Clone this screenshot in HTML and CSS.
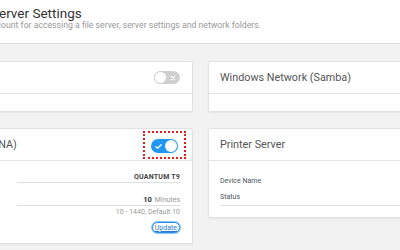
FILE: index.html
```html
<!DOCTYPE html>
<html>
<head>
<meta charset="utf-8">
<link rel="stylesheet" href="styles.css">
</head>
<body>
<header class="header">
  <h1 class="title">Server Settings</h1>
  <p class="subtitle">Set up an account for accessing a file server, server settings and network folders.</p>
</header>
<main class="grid">
  <div class="col">
    <section class="card">
      <div class="card-head">
        <h2 class="card-title">FTP Server</h2>
        <span class="toggle off">
          <svg class="toggle-icon" viewBox="0 0 8 8"><path d="M1.5 1.5 6.5 6.5M6.5 1.5 1.5 6.5" stroke="#fff" stroke-width="1.6" stroke-linecap="round"/></svg>
          <span class="knob"></span>
        </span>
      </div>
      <div class="card-body empty"></div>
    </section>
    <section class="card">
      <div class="card-head">
        <h2 class="card-title">Media Server (DLNA)</h2>
        <span class="focus">
          <span class="toggle on">
            <svg class="toggle-icon" viewBox="0 0 8 8"><path d="M1 4.2 3 6 7 2" fill="none" stroke="#fff" stroke-width="1.4" stroke-linecap="round" stroke-linejoin="round"/></svg>
            <span class="knob"></span>
          </span>
        </span>
      </div>
      <div class="card-body form">
        <div class="row first">
          <span class="label">Device Name</span>
          <span class="field"><span class="value">QUANTUM T9</span></span>
        </div>
        <div class="row second">
          <span class="label">Sleep Timer</span>
          <span class="field"><span class="num">10</span><span class="unit">Minutes</span></span>
        </div>
        <div class="hint">10 - 1440, Default 10</div>
        <div class="actions"><button class="btn">Update</button></div>
      </div>
    </section>
  </div>
  <div class="col">
    <section class="card">
      <div class="card-head">
        <h2 class="card-title">Windows Network (Samba)</h2>
      </div>
      <div class="card-body empty"></div>
    </section>
    <section class="card">
      <div class="card-head">
        <h2 class="card-title">Printer Server</h2>
      </div>
      <div class="card-body info">
        <div class="info-row">Device Name</div>
        <div class="info-row last">Status</div>
      </div>
    </section>
  </div>
</main>
</body>
</html>
```
FILE: styles.css
```css
html, body {
  margin: 0;
  padding: 0;
}
body {
  width: 400px;
  height: 250px;
  overflow: hidden;
  background: #f2f2f2;
  font-family: Roboto, "Liberation Sans", sans-serif;
  color: #333;
}
.header {
  background: #fff;
  border-bottom: 1px solid #dcdcdc;
  height: 44px;
  box-sizing: border-box;
  padding-top: 6px;
}
.title {
  margin: 0 0 0 -9px;
  font-size: 13.5px;
  font-weight: 400;
  line-height: 15px;
  color: #333;
  white-space: nowrap;
}
.subtitle {
  margin: 0 0 0 -51px;
  font-size: 8.7px;
  line-height: 9px;
  color: #9a9a9a;
  white-space: nowrap;
}
.grid {
  display: grid;
  grid-template-columns: 289px 289px;
  column-gap: 15px;
  margin: 17px 0 0 -96px;
}
.col {
  display: flex;
  flex-direction: column;
  gap: 16px;
}
.card {
  background: #fff;
  border: 1px solid #e2e2e2;
  border-radius: 2px;
  box-shadow: 0 1px 2px rgba(0,0,0,0.06);
}
.card-head {
  height: 31px;
  display: flex;
  align-items: center;
  justify-content: space-between;
  padding: 0 12px 0 11px;
  border-bottom: 1px solid #e6e6e6;
}
.card-title {
  margin: 0;
  font-size: 10.8px;
  font-weight: 400;
  color: #555;
}
.card-body.empty {
  height: 17px;
}
.toggle {
  position: relative;
  display: inline-flex;
  align-items: center;
  width: 26px;
  height: 13px;
  border-radius: 7px;
  box-sizing: border-box;
}
.toggle.off {
  background: #cfcfcf;
  justify-content: flex-end;
  padding-right: 4px;
}
.toggle.on {
  background: #2196f3;
  justify-content: flex-start;
  padding-left: 4px;
  width: 27px;
  height: 14px;
}
.toggle-icon {
  width: 6px;
  height: 6px;
  display: block;
}
.toggle.on .toggle-icon {
  width: 7px;
  height: 7px;
}
.knob {
  position: absolute;
  border-radius: 50%;
  background: #fff;
  box-sizing: border-box;
}
.toggle.off .knob {
  left: 0;
  top: 0;
  width: 13px;
  height: 13px;
  border: 1px solid #cfcfcf;
}
.toggle.on .knob {
  right: 1px;
  top: 1px;
  width: 12px;
  height: 12px;
}
.focus {
  display: inline-flex;
  padding: 6px 6px 4px 6px;
  border: 2px dotted #e81c1c;
  margin-right: -6px;
  margin-top: 1px;
}
.card-body.form {
  padding: 10px 12px 10px 12px;
}
.row {
  display: flex;
}
.row .label {
  width: 100px;
  flex: none;
  font-size: 7px;
  color: #4a5560;
}
.row .field {
  flex: 1;
  display: flex;
  justify-content: flex-end;
  align-items: flex-end;
  border-bottom: 1px solid #dedede;
}
.row.first {
  height: 12px;
}
.row.first .label,
.row.first .field {
  align-items: center;
  line-height: 12px;
}
.row.second {
  height: 23px;
  align-items: flex-end;
}
.row.second .label {
  line-height: 10px;
}
.row.second .field {
  height: 23px;
  box-sizing: border-box;
  padding-bottom: 1px;
}
.value {
  font-size: 7px;
  font-weight: 700;
  color: #444;
  letter-spacing: 0.2px;
}
.num {
  font-weight: 700;
  color: #333;
  font-size: 7.5px;
  margin-right: 3px;
}
.unit {
  color: #999;
  font-size: 7px;
}
.hint {
  text-align: right;
  font-size: 7px;
  line-height: 13px;
  color: #999;
}
.actions {
  display: flex;
  justify-content: flex-end;
  margin-top: 3px;
}
.btn {
  font-family: Roboto, "Liberation Sans", sans-serif;
  font-size: 7px;
  line-height: 8px;
  height: 11px;
  padding: 0 2px;
  color: #2b7bd6;
  background: #fff;
  border: 1px solid #2b8be8;
  border-radius: 6px;
  box-shadow: 0 0 0 1px #8cc4f5;
  text-decoration: underline;
}
.card-body.info {
  padding: 12px 12px 11px 11px;
}
.info-row {
  font-size: 7px;
  line-height: 16px;
  color: #4a5560;
}
.info-row.last {
  border-bottom: 1px solid #e0e0e0;
}
```
